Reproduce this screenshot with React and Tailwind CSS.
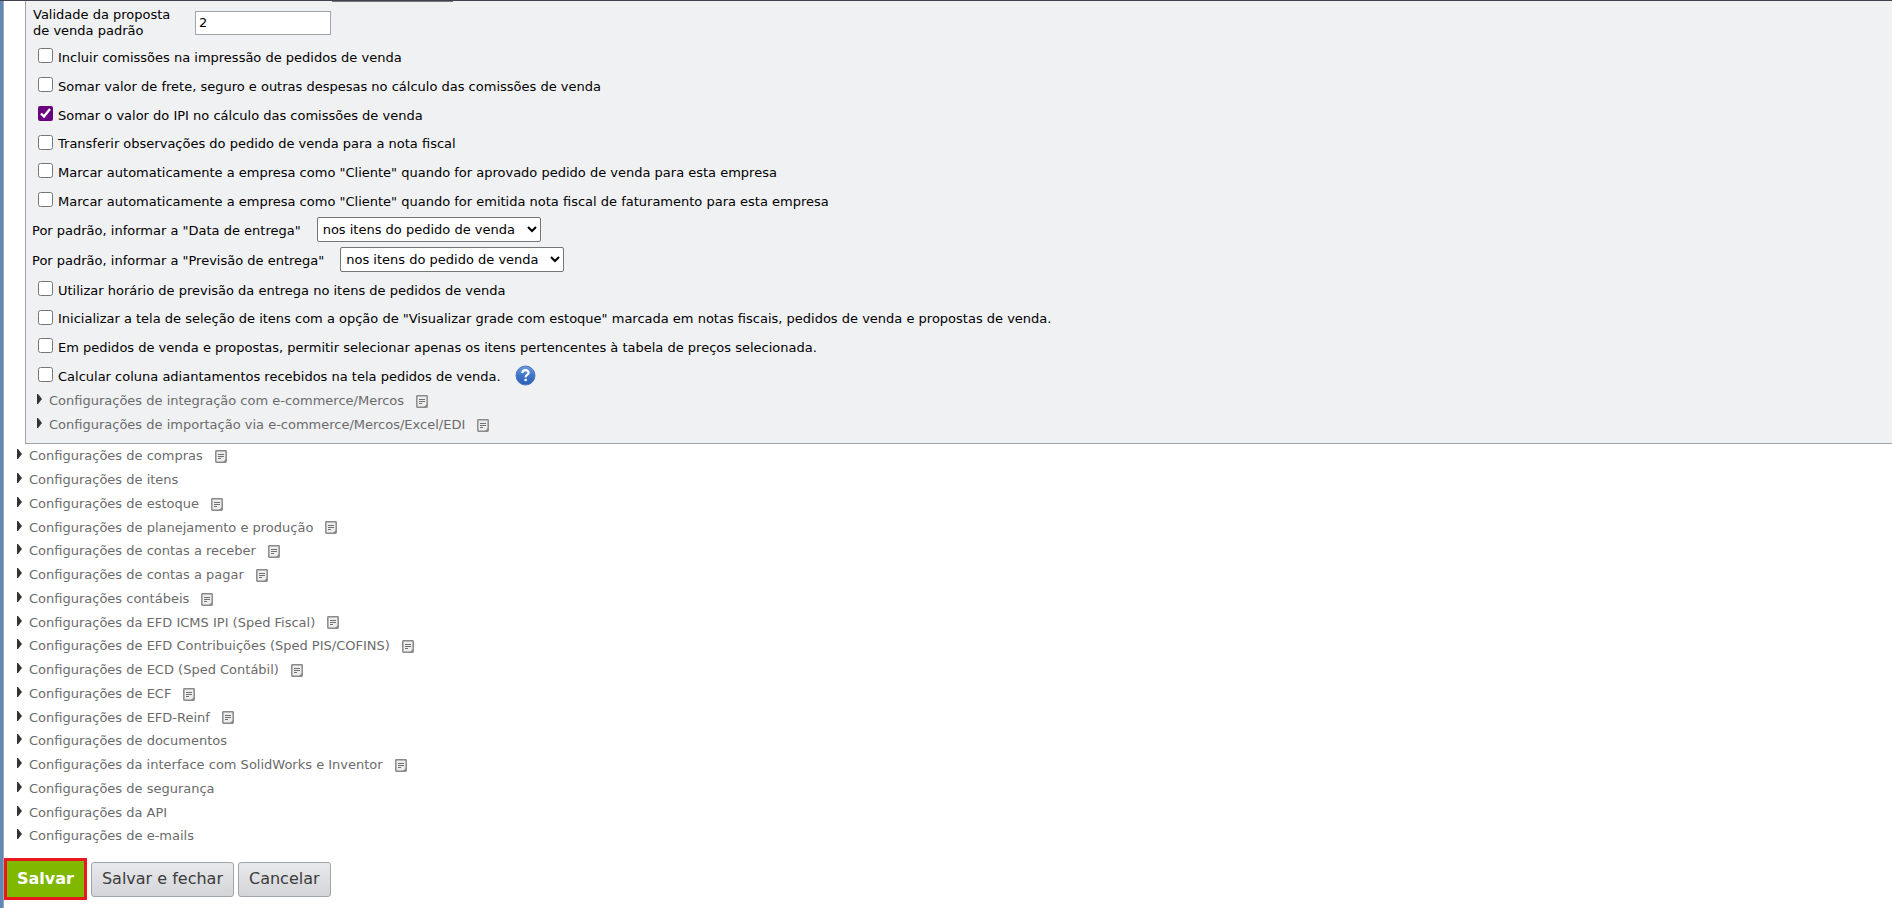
import { useState } from "react";

const ORDER_OPTIONS = [
    { id: "comissoes-impressao", label: "Incluir comissões na impressão de pedidos de venda" },
    { id: "somar-frete", label: "Somar valor de frete, seguro e outras despesas no cálculo das comissões de venda" },
    { id: "somar-ipi", label: "Somar o valor do IPI no cálculo das comissões de venda" },
    { id: "transferir-obs", label: "Transferir observações do pedido de venda para a nota fiscal" },
    { id: "cliente-pedido", label: 'Marcar automaticamente a empresa como "Cliente" quando for aprovado pedido de venda para esta empresa' },
    { id: "cliente-nota", label: 'Marcar automaticamente a empresa como "Cliente" quando for emitida nota fiscal de faturamento para esta empresa' },
];

const ITEM_OPTIONS = [
    { id: "horario-previsao", label: "Utilizar horário de previsão da entrega no itens de pedidos de venda" },
    { id: "grade-estoque", label: 'Inicializar a tela de seleção de itens com a opção de "Visualizar grade com estoque" marcada em notas fiscais, pedidos de venda e propostas de venda.' },
    { id: "tabela-precos", label: "Em pedidos de venda e propostas, permitir selecionar apenas os itens pertencentes à tabela de preços selecionada." },
    { id: "adiantamentos", label: "Calcular coluna adiantamentos recebidos na tela pedidos de venda.", help: true },
];

const SALES_SECTIONS = [
    { title: "Configurações de integração com e-commerce/Mercos", note: true },
    { title: "Configurações de importação via e-commerce/Mercos/Excel/EDI", note: true },
];

const SECTIONS = [
    { title: "Configurações de compras", note: true },
    { title: "Configurações de itens" },
    { title: "Configurações de estoque", note: true },
    { title: "Configurações de planejamento e produção", note: true },
    { title: "Configurações de contas a receber", note: true },
    { title: "Configurações de contas a pagar", note: true },
    { title: "Configurações contábeis", note: true },
    { title: "Configurações da EFD ICMS IPI (Sped Fiscal)", note: true },
    { title: "Configurações de EFD Contribuições (Sped PIS/COFINS)", note: true },
    { title: "Configurações de ECD (Sped Contábil)", note: true },
    { title: "Configurações de ECF", note: true },
    { title: "Configurações de EFD-Reinf", note: true },
    { title: "Configurações de documentos" },
    { title: "Configurações da interface com SolidWorks e Inventor", note: true },
    { title: "Configurações de segurança" },
    { title: "Configurações da API" },
    { title: "Configurações de e-mails" },
];

function NoteIcon() {
    return (
        <svg width="12" height="13" viewBox="0 0 12 13" className="shrink-0" aria-hidden="true">
            <rect x="0.8" y="0.8" width="10.4" height="11.4" rx="0.6" fill="#ededed" stroke="#8a8a8a" strokeWidth="1.5" />
            <path d="M3 4.5h6M3 6.5h6M3 8.5h3" stroke="#6f6f6f" strokeWidth="1" />
            <path d="M8 12l3-3v3z" fill="#8a8a8a" />
        </svg>
    );
}

function HelpIcon() {
    return (
        <svg width="21" height="21" viewBox="0 0 21 21" className="block" aria-hidden="true">
            <defs>
                <linearGradient id="help-fill" x1="0" y1="0" x2="0" y2="1">
                    <stop offset="0" stopColor="#6d9de0" />
                    <stop offset="0.5" stopColor="#3f75c9" />
                    <stop offset="1" stopColor="#2b5cb4" />
                </linearGradient>
            </defs>
            <circle cx="10.5" cy="10.5" r="9.5" fill="url(#help-fill)" stroke="#4a76ba" strokeWidth="1" />
            <path d="M7.4 8c0-3.8 6.2-3.6 6.2-.3 0 2.2-3 2.1-3 4.5" fill="none" stroke="#fff" strokeWidth="2.2" />
            <rect x="9.5" y="13.8" width="2.3" height="2.3" fill="#fff" />
        </svg>
    );
}

function CheckRow({ option, checked, onToggle }) {
    return (
        <div className="flex h-[29px] items-center nth-[6n]:h-7">
            <input
                type="checkbox"
                id={option.id}
                checked={checked}
                onChange={() => onToggle(option.id)}
                className="mr-[5px] mb-1 ml-1.5 size-[15px] shrink-0 accent-[#6a0080]"
            />
            <label htmlFor={option.id}>{option.label}</label>
            {option.help && (
                <button type="button" aria-label="Ajuda" className="mb-0.5 ml-3.5">
                    <HelpIcon />
                </button>
            )}
        </div>
    );
}

function SelectRow({ id, label }) {
    return (
        <div className="flex h-[30px] items-center">
            <label htmlFor={id}>{label}</label>
            <select id={id} className="mb-1 ml-4 h-[25px] w-56 rounded-xs border border-[#767676] bg-white pl-px">
                <option>nos itens do pedido de venda</option>
                <option>no pedido de venda</option>
            </select>
        </div>
    );
}

function SectionLink({ section }) {
    return (
        <li className="flex h-6 items-center nth-[4n]:h-[23px]">
            <svg width="6" height="10" viewBox="0 0 6 10" className="mr-[7px] mb-1 shrink-0" aria-hidden="true">
                <path d="M1 0h1l4 5-4 5H1z" fill="#333" />
            </svg>
            <a href="#" className="mr-3 text-[#6b6b6b]">{section.title}</a>
            {section.note && <NoteIcon />}
        </li>
    );
}

export default function App() {
    const [checked, setChecked] = useState({ "somar-ipi": true });
    const [validity, setValidity] = useState("2");

    const toggle = (id) => setChecked((prev) => ({ ...prev, [id]: !prev[id] }));

    return (
        <div className="min-h-screen border-t border-[#41414d] bg-white font-['DejaVu_Sans',sans-serif] text-[13px] leading-4 text-black">
            <main className="min-h-[calc(100vh-1px)] border-l-3 border-[#5f88b6]">
                <div className="min-h-[calc(100vh-1px)] border-l border-[#a3a8ae]">
                    <section className="ml-[21px] border-b border-l border-[#a0a5ab] bg-[#f0f1f3] pb-1.5 pl-1.5">
                        <div className="ml-[300px] h-px w-[121px] bg-[#767676]" />
                        <div className="flex h-[41px] items-center">
                            <label htmlFor="validade" className="ml-px w-[162px] pr-2">
                                Validade da proposta<br />de venda padrão
                            </label>
                            <input
                                id="validade"
                                type="text"
                                value={validity}
                                onChange={(e) => setValidity(e.target.value)}
                                className="h-6 w-[136px] border border-[#a0a5ab] bg-white px-[3px]"
                            />
                        </div>
                        {ORDER_OPTIONS.map((o) => (
                            <CheckRow key={o.id} option={o} checked={!!checked[o.id]} onToggle={toggle} />
                        ))}
                        <SelectRow id="data-entrega" label={'Por padrão, informar a "Data de entrega"'} />
                        <SelectRow id="previsao-entrega" label={'Por padrão, informar a "Previsão de entrega"'} />
                        {ITEM_OPTIONS.map((o) => (
                            <CheckRow key={o.id} option={o} checked={!!checked[o.id]} onToggle={toggle} />
                        ))}
                        <ul className="-mt-0.5 ml-1">
                            {SALES_SECTIONS.map((s) => (
                                <SectionLink key={s.title} section={s} />
                            ))}
                        </ul>
                    </section>

                    <ul className="ml-3">
                        {SECTIONS.map((s) => (
                            <SectionLink key={s.title} section={s} />
                        ))}
                    </ul>

                    <div className="mt-2.5 flex items-center gap-1 text-base">
                        <button type="button" className="h-[42px] border-3 border-[#e8191c] bg-[#80b800] px-2.5 font-bold text-white">
                            Salvar
                        </button>
                        <button type="button" className="h-[35px] rounded-[3px] border border-[#a0a5ab] bg-linear-to-b from-[#e8e9eb] to-[#d3d5d9] px-2.5 text-[#3c3c3c]">
                            Salvar e fechar
                        </button>
                        <button type="button" className="h-[35px] rounded-[3px] border border-[#a0a5ab] bg-linear-to-b from-[#e8e9eb] to-[#d3d5d9] px-2.5 text-[#3c3c3c]">
                            Cancelar
                        </button>
                    </div>
                </div>
            </main>
        </div>
    );
}
